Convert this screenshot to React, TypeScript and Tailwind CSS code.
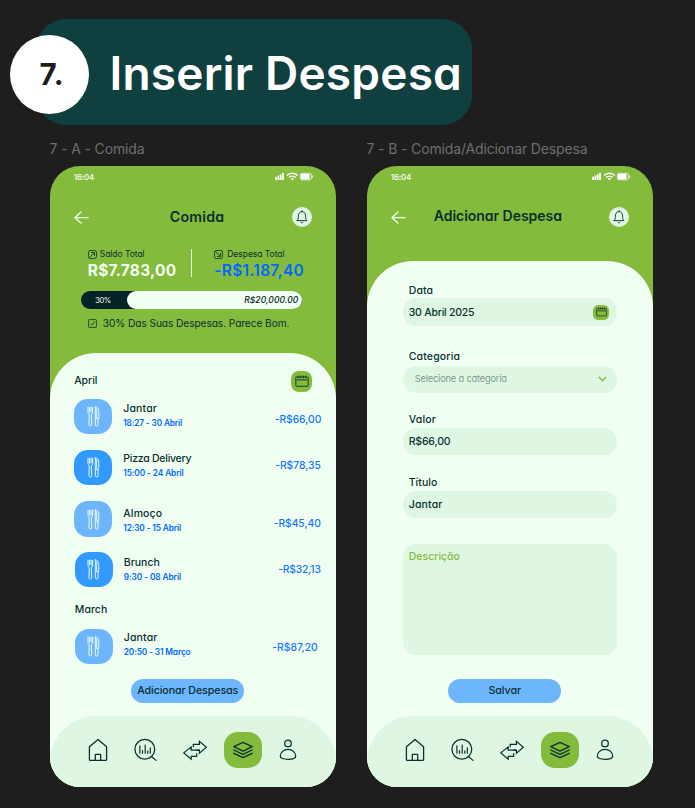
import type { ReactNode } from "react";

function StatusBar() {
  return (
    <div className="flex h-[20.5px] shrink-0 items-center justify-between pr-[23px] pl-[24px] text-white">
      <span className="text-[8px] leading-3 font-medium tracking-[-0.18px]">16:04</span>
      <svg className="h-[9px] w-[38px]" viewBox="0 0 38 9" fill="currentColor">
        <rect x="0.2" y="4.800" width="1.800" height="3.200" rx="0.3" />
        <rect x="2.500" y="3.500" width="1.800" height="4.500" rx="0.3" />
        <rect x="4.800" y="2.200" width="1.800" height="5.800" rx="0.3" />
        <rect x="7.100" y="0.800" width="1.800" height="7.200" rx="0.3" />
        <path d="M11.900 3.600a7.600 7.600 0 0 1 11 0M14 5.500a4.800 4.800 0 0 1 6.800 0" fill="none" stroke="currentColor" strokeWidth="1.4" />
        <path d="M15.800 6.700a2.300 2.300 0 0 1 3.200 0l-1.600 1.600z" />
        <rect x="25.400" y="1.300" width="11" height="6.600" rx="1.400" fill="none" stroke="currentColor" strokeWidth="0.7" />
        <rect x="25.800" y="1.700" width="8.800" height="5.800" rx="0.8" />
        <rect x="36.900" y="3.300" width="0.8" height="2.600" rx="0.4" />
      </svg>
    </div>
  );
}

function TitleBar({ children }: { children: ReactNode }) {
  return (
    <div className="mt-5 flex h-[21px] shrink-0 items-center pr-[24px] pl-[24px]">
      <svg className="h-[14px] w-[16px] shrink-0" viewBox="0 0 16 14" fill="none" stroke="#f1fff3" strokeWidth="1.3" strokeLinecap="round" strokeLinejoin="round">
        <path d="M14.100 7.700H.9M7 2L.9 7.700l6.100 5.400" />
      </svg>
      {children}
      <div className="ml-auto flex h-[20px] w-[20px] shrink-0 items-center justify-center rounded-full bg-[#dff7e2]">
        <svg className="h-[14px] w-[12px]" viewBox="0 0 12 14" fill="none" stroke="#093030" strokeWidth="0.9" strokeLinejoin="round" strokeLinecap="round">
          <path d="M1.2 10.600h9.600c-1-1.200-1.200-2.200-1.200-4.400C9.600 3.300 8.200 1.600 6 1.600S2.400 3.300 2.400 6.200c0 2.200-.2 3.200-1.200 4.400zM6 1.600V.8M4.900 12.300c.5.7 1.700.7 2.200 0" />
        </svg>
      </div>
    </div>
  );
}

function CalendarIcon({ className }: { className: string }) {
  return (
    <svg className={className} viewBox="0 0 14 12" fill="none" stroke="#093030" strokeWidth="0.9">
      <rect x="0.8" y="2" width="12.400" height="9.300" rx="0.6" />
      <path d="M1.500 4.900h11M3.300.6v2.600M5.800.6v2.600M8.300.6v2.600M10.800.6v2.600" />
    </svg>
  );
}

function TrendIcon({ down = false }: { down?: boolean }) {
  return (
    <svg className="h-[9px] w-[9px] shrink-0" viewBox="0 0 9 9" fill="none" stroke="#093030" strokeWidth="0.8" strokeLinecap="round" strokeLinejoin="round">
      <rect x="0.5" y="0.5" width="8" height="8" rx="1.900" />
      {down ? <path d="M1.500 1.500l4.800 4.800M6.500 3.300v3.200H3.300" /> : <path d="M1.500 7.500l4.800-4.800M3.300 2.500h3.200v3.200" />}
    </svg>
  );
}

function UtensilsIcon() {
  return (
    <svg className="h-[21px] w-[13px]" viewBox="0 0 13 21" fill="none" stroke="#f1fff3" strokeWidth="0.95" strokeLinejoin="round" strokeLinecap="round">
      <path d="M1 1.200v5.300c0 1.100.4 1.700 1.300 2.100L1.900 18.700c0 1.700 2.800 1.700 2.800 0L4.300 8.600c.9-.4 1.300-1 1.300-2.100V1.200M2.600 1.200v5M4.100 1.200v5" />
      <path d="M8.300 1v17.800c0 1.600 2.700 1.600 2.700 0V13c.5-.6.8-1.400.8-2.600V5.500C11.800 2.600 10.300 1 8.300 1zM9.700 3v9.800H11" />
    </svg>
  );
}

const iconProps = {
  className: "h-6 w-6 shrink-0",
  viewBox: "0 0 24 24",
  fill: "none",
  stroke: "#093030",
  strokeWidth: 1.3,
  strokeLinejoin: "round" as const,
  strokeLinecap: "round" as const,
};

function BottomNav() {
  return (
    <nav className="flex h-[71.5px] w-full shrink-0 items-start rounded-t-[46px] bg-[#dff7e2] pt-[16.5px] pl-[36px]">
      <div className="flex h-[36px] items-center">
        <svg {...iconProps}>
          <path d="M3.400 8.800L12 1.500l8.600 7.300v12.600q0 1-1 1H4.400q-1 0-1-1zM9.300 22.400v-5.600q0-.5.5-.5h4.400q.5 0 .5.5v5.600" />
        </svg>
        <svg {...iconProps} className="ml-[23px] h-6 w-6 shrink-0">
          <circle cx="11.800" cy="11.200" r="9.900" />
          <path d="M18.500 18.500l4.500 3.900M6.900 7.800v7.400M9.500 12.500v2.700M12.200 7v8.200M14.800 12.800v2.400M17.300 9.800v5.400" strokeWidth="1.2" />
        </svg>
        <svg {...iconProps} className="ml-[26px] h-6 w-6 shrink-0" strokeWidth="1.2" strokeLinejoin="miter">
          <path d="M10.300 6.300h6.100V3.200l7 6-7 6v-3.100h-2.600" />
          <path d="M10.300 6.300v2.400M13.700 18.300H8.200v2.900L.8 14.900l7.400-6v3.200h7.600M13.700 18.300v-2.600" />
        </svg>
        <div className="ml-[17.5px] flex h-[36px] w-[38px] items-center justify-center rounded-[14px] bg-[#85bb3c]">
          <svg {...iconProps}>
            <path d="M12 4.300l9.200 4.400-9.200 4.400-9.200-4.400zM2.800 12l9.200 4.400 9.200-4.400M2.800 15.300l9.200 4.400 9.200-4.400" />
          </svg>
        </div>
        <svg {...iconProps} className="ml-[14px] h-6 w-6 shrink-0">
          <circle cx="12" cy="5.400" r="3.300" />
          <path d="M12 11.300c4.400 0 7.700 3.200 7.700 7 0 1.900-3.300 3-7.700 3s-7.700-1.100-7.700-3c0-3.800 3.300-7 7.700-7z" />
        </svg>
      </div>
    </nav>
  );
}

function Phone({ children }: { children: ReactNode }) {
  return <section className="flex h-[621px] w-[286.5px] flex-col overflow-hidden rounded-[30px] bg-[#85bb3c]">{children}</section>;
}

type Expense = {
  title: string;
  time: string;
  amount: string;
  row: string;
  tile: string;
  titleClass: string;
  timeClass: string;
  textPad: string;
  amountClass: string;
};

const april: Expense[] = [
  { title: "Jantar", time: "18:27 - 30 Abril", amount: "-R$66,00", row: "mt-[7.5px] pl-[24.5px]", tile: "bg-[#6db6fe]", titleClass: "tracking-[0.15px]", timeClass: "tracking-[-0.15px]", textPad: "pt-[2.5px]", amountClass: "pt-[12.5px] pr-[15px] tracking-[-0.04px]" },
  { title: "Pizza Delivery", time: "15:00 - 24 Abril", amount: "-R$78,35", row: "mt-[15.500px] pl-[24.5px]", tile: "bg-[#3299ff]", titleClass: "tracking-[-0.25px]", timeClass: "tracking-[-0.1px]", textPad: "pt-[1.5px]", amountClass: "pt-[7px] pr-[15.5px] tracking-[-0.03px]" },
  { title: "Almoço", time: "12:30 - 15 Abril", amount: "-R$45,40", row: "mt-4 pl-[24.5px]", tile: "bg-[#6db6fe]", titleClass: "tracking-[0.15px]", timeClass: "tracking-[-0.13px]", textPad: "pt-[4.5px]", amountClass: "pt-[14px] pr-[15.5px] tracking-[-0.06px]" },
  { title: "Brunch", time: "9:30 - 08 Abril", amount: "-R$32,13", row: "mt-[15px] pl-[25px]", tile: "bg-[#3299ff]", titleClass: "tracking-[0.01px]", timeClass: "tracking-[-0.08px]", textPad: "pt-[3.5px]", amountClass: "pt-[9px] pr-[15.5px] tracking-[-0.16px]" },
];

const march: Expense[] = [
  { title: "Jantar", time: "20:50 - 31 Março", amount: "-R$87,20", row: "mt-[11px] pl-[25px]", tile: "bg-[#6db6fe]", titleClass: "tracking-[0.15px]", timeClass: "tracking-[-0.12px]", textPad: "pt-[1px]", amountClass: "pt-[10.5px] pr-[18.5px] tracking-[0.03px]" },
];

function ExpenseRow({ item }: { item: Expense }) {
  return (
    <div className={`flex h-[35.5px] items-start ${item.row}`}>
      <div className={`flex h-[35.5px] w-[38px] shrink-0 items-center justify-center rounded-[14px] ${item.tile}`}>
        <UtensilsIcon />
      </div>
      <div className={`ml-[11px] flex flex-1 flex-col whitespace-nowrap ${item.textPad}`}>
        <span className={`text-[10.5px] leading-4 font-medium text-[#093030] ${item.titleClass}`}>{item.title}</span>
        <span className={`text-[8.3px] leading-[13px] font-semibold text-[#0068ff] ${item.timeClass}`}>{item.time}</span>
      </div>
      <span className={`text-[10.3px] leading-4 font-medium whitespace-nowrap text-[#1478fb] ${item.amountClass}`}>{item.amount}</span>
    </div>
  );
}

function FoodScreen() {
  return (
    <Phone>
      <StatusBar />
      <TitleBar>
        <h2 className="ml-[80px] text-[14.2px] leading-5 font-semibold tracking-[0.2px] text-[#093030]">Comida</h2>
      </TitleBar>

      <div className="mt-[19px] flex h-[32px] text-[#093030]">
        <div className="flex w-[141.5px] flex-col pl-[38px]">
          <div className="flex h-[17px] items-center gap-[3px]">
            <TrendIcon />
            <span className="text-[8.5px] tracking-[-0.04px]">Saldo Total</span>
          </div>
          <span className="pt-[0.5px] text-[15.5px] leading-[17px] font-bold tracking-[0.22px] text-[#f1fff3]">R$7.783,00</span>
        </div>
        <div className="mt-[2px] h-[28px] w-px bg-[#dff7e2]" />
        <div className="flex flex-col pl-[22px]">
          <div className="flex h-[17px] items-center gap-1">
            <TrendIcon down />
            <span className="text-[8.5px] tracking-[-0.03px]">Despesa Total</span>
          </div>
          <span className="pt-[0.5px] text-[15.5px] leading-[17px] font-semibold tracking-[0.3px] text-[#0068ff]">-R$1.187,40</span>
        </div>
      </div>

      <div className="mt-[12.5px] ml-[31.5px] flex h-[18px] w-[220.5px] shrink-0 rounded-full bg-[#052224]">
        <div className="flex w-[46px] items-center pt-px pl-[14px] text-[7.5px] tracking-[-0.4px] text-[#f1fff3]">30%</div>
        <div className="flex flex-1 items-center justify-end rounded-full bg-[#f1fff3] pr-[3.5px] text-[8.5px] font-medium tracking-[0.06px] text-[#052224] italic">R$20,000.00</div>
      </div>

      <div className="mt-[6px] flex h-4 items-center gap-[6px] pl-[38px] text-[#093030]">
        <svg className="h-[9px] w-[9px]" viewBox="0 0 9 9" fill="none" stroke="currentColor" strokeWidth="0.8">
          <rect x="0.6" y="0.6" width="7.800" height="7.800" rx="0.6" />
          <path d="M2.500 4.700l1.400 1.400 2.900-3.600" />
        </svg>
        <span className="text-[10.2px] leading-4 tracking-[-0.09px]">30% Das Suas Despesas. Parece Bom.</span>
      </div>

      <div className="mt-[22px] flex flex-1 flex-col rounded-t-[46px] bg-[#f1fff3]">
        <div className="mt-[16px] flex h-[22px] items-center justify-between pr-[24px] pl-[24.5px]">
          <span className="pt-[1px] text-[10.5px] leading-4 font-medium tracking-[-0.07px] text-[#093030]">April</span>
          <div className="mt-[2px] flex h-[20.5px] w-[21.5px] items-center justify-center rounded-[8px] bg-[#85bb3c]">
            <CalendarIcon className="h-3 w-[14px]" />
          </div>
        </div>
        {april.map((item) => (
          <ExpenseRow key={item.title} item={item} />
        ))}
        <span className="mt-[14.5px] pl-[25px] text-[10.5px] leading-4 font-medium tracking-[0.05px] text-[#093030]">March</span>
        {march.map((item) => (
          <ExpenseRow key={item.title} item={item} />
        ))}
        <button className="mt-[14.5px] ml-[81.5px] h-6 w-[113px] rounded-full bg-[#6db6fe] pt-px text-[10.7px] font-medium tracking-[-0.1px] whitespace-nowrap text-[#093030]">Adicionar Despesas</button>
        <div className="mt-auto">
          <BottomNav />
        </div>
      </div>
    </Phone>
  );
}

function Field({ label, labelClass, className, children }: { label: string; labelClass: string; className: string; children: ReactNode }) {
  return (
    <label className={`flex flex-col text-[10.5px] font-medium text-[#093030] ${className}`}>
      <span className={`h-4 pt-[0.7px] pl-[5.500px] leading-4 ${labelClass}`}>{label}</span>
      {children}
    </label>
  );
}

function AddExpenseScreen() {
  return (
    <Phone>
      <StatusBar />
      <TitleBar>
        <h2 className="ml-[27px] -mt-[2px] text-[14px] leading-5 font-semibold tracking-[-0.03px] text-[#093030]">Adicionar Despesa</h2>
      </TitleBar>
      <div className="mt-[33.5px] flex flex-1 flex-col rounded-t-[46px] bg-[#f1fff3]">
        <div className="flex flex-col pr-[36px] pl-[36.5px]">
          <Field label="Data" labelClass="tracking-[0.1px]" className="mt-[21px]">
            <div className="flex h-[27.5px] items-center justify-between rounded-[13px] bg-[#dff7e2] pr-[8px] pl-[5.5px]">
              <span className="pt-px tracking-[-0.23px]">30 Abril 2025</span>
              <div className="flex h-[15px] w-4 items-center justify-center rounded-[5.5px] bg-[#85bb3c]">
                <CalendarIcon className="h-[9.5px] w-[11px]" />
              </div>
            </div>
          </Field>
          <Field label="Categoria" labelClass="tracking-[0.15px]" className="mt-[22.5px]">
            <div className="mt-[1.5px] flex h-[27px] items-center justify-between rounded-[13px] bg-[#dff7e2] pr-[10px] pl-[11.5px]">
              <span className="text-[9.3px] font-normal tracking-[-0.2px] text-[#093030]/50">Selecione a categoria</span>
              <svg className="h-[6px] w-[9px]" viewBox="0 0 9 6" fill="none" stroke="#85bb3c" strokeWidth="1.3" strokeLinecap="round" strokeLinejoin="round">
                <path d="M1.200 1.200l3.300 3.500 3.300-3.500" />
              </svg>
            </div>
          </Field>
          <Field label="Valor" labelClass="tracking-[0.15px]" className="mt-[18.5px]">
            <div className="mt-[0.5px] flex h-[27px] items-center rounded-[13px] bg-[#dff7e2] pl-[5.5px]">
              <span className="pt-px tracking-[-0.2px]">R$66,00</span>
            </div>
          </Field>
          <Field label="Título" labelClass="tracking-[0.02px]" className="mt-[19.500px]">
            <div className="mt-[0.5px] flex h-[27px] items-center rounded-[13px] bg-[#dff7e2] pl-[5.5px]">
              <span className="pt-px tracking-[0.15px]">Jantar</span>
            </div>
          </Field>
          <div className="mt-[26px] h-[111px] rounded-[13px] bg-[#dff7e2] pt-[5px] pl-[5.5px] text-[10.5px] leading-4 font-medium text-[#85bb3c]">Descrição</div>
        </div>
        <button className="mt-[24px] ml-[81.5px] h-6 w-[113px] rounded-full bg-[#6db6fe] pt-px text-[10.7px] font-medium tracking-[-0.07px] text-[#093030]">Salvar</button>
        <div className="mt-auto">
          <BottomNav />
        </div>
      </div>
    </Phone>
  );
}

export default function App() {
  return (
    <main className="h-[808px] w-[695px] overflow-hidden bg-[#1e1e1e] pt-[19px] font-['Inter',sans-serif] [font-feature-settings:'cv11']">
      <header className="relative ml-[36px] flex h-[106px] w-[436px] items-center rounded-[30px] bg-[#103f3f] pt-[2px] pl-[73.5px]">
        <div className="absolute top-[15.5px] -left-[26px] flex h-[79px] w-[79px] items-center justify-center rounded-full bg-white pl-[5px] text-[29.5px] font-bold tracking-[0.8px] text-[#1e1e1e]">7.</div>
        <h1 className="text-[46px] leading-[52px] font-semibold tracking-[0.2px] whitespace-nowrap text-white">Inserir Despesa</h1>
      </header>
      <div className="mt-[14px] flex h-5 gap-[31px] pl-[49.5px] text-[14px] leading-5 tracking-[-0.14px] text-[#6e6e6e] [font-feature-settings:normal]">
        <span className="w-[286px]">7 - A - Comida</span>
        <span>7 - B - Comida/Adicionar Despesa</span>
      </div>
      <div className="mt-[7.25px] flex gap-[30.5px] pl-[49.75px]">
        <FoodScreen />
        <AddExpenseScreen />
      </div>
    </main>
  );
}
